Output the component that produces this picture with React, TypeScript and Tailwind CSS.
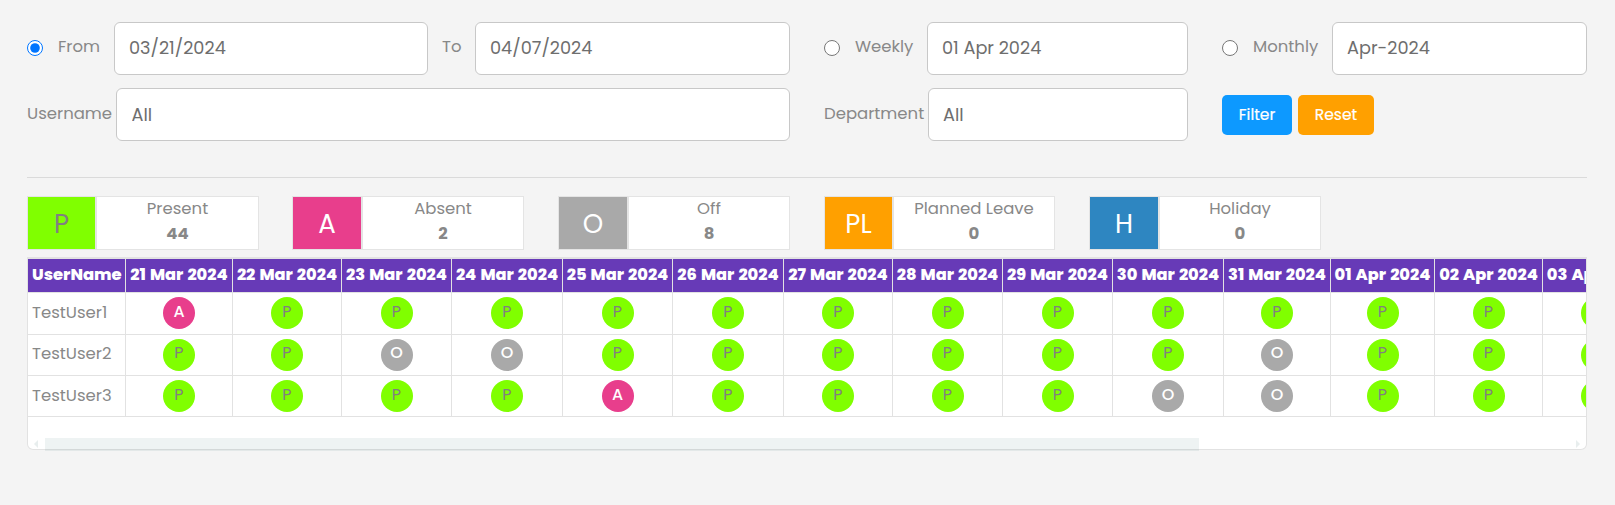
import clsx from "clsx";

type Status = "P" | "A" | "O";

const summary = [
  { code: "P", label: "Present", count: 44, box: "mr-[33px] w-[232px]", color: "w-[67px] bg-[#80ff00] text-[#808080]" },
  { code: "A", label: "Absent", count: 2, box: "mr-[34px] w-[232px]", color: "w-[68px] bg-[#e83e8c] text-white" },
  { code: "O", label: "Off", count: 8, box: "mr-[34px] w-[232px]", color: "w-[68px] bg-[#a9a9a9] text-white" },
  { code: "PL", label: "Planned Leave", count: 0, box: "mr-[34px] w-[231px]", color: "w-[67px] bg-[#ffa000] text-white" },
  { code: "H", label: "Holiday", count: 0, box: "w-[232px]", color: "w-[68px] bg-[#2e86c1] text-white" },
];

const columns = [
  { date: "21 Mar 2024", width: "w-[107px]" },
  { date: "22 Mar 2024", width: "w-[109px]" },
  { date: "23 Mar 2024", width: "w-[110px]" },
  { date: "24 Mar 2024", width: "w-[111px]" },
  { date: "25 Mar 2024", width: "w-[110px]" },
  { date: "26 Mar 2024", width: "w-[111px]" },
  { date: "27 Mar 2024", width: "w-[109px]" },
  { date: "28 Mar 2024", width: "w-[110px]" },
  { date: "29 Mar 2024", width: "w-[110px]" },
  { date: "30 Mar 2024", width: "w-[111px]" },
  { date: "31 Mar 2024", width: "w-[107px]" },
  { date: "01 Apr 2024", width: "w-[104px]" },
  { date: "02 Apr 2024", width: "w-[108px]" },
  { date: "03 Apr 2024", width: "w-[108px]" },
];

const users = [
  { name: "TestUser1", height: "h-[42px]", cell: "pb-0", badge: "pb-0.5", days: "APPPPPPPPPPPPP" },
  { name: "TestUser2", height: "h-[41px]", cell: "pb-0.5", badge: "pb-1", days: "PPOOPPPPPPOPPP" },
  { name: "TestUser3", height: "h-[41px]", cell: "pb-0", badge: "pb-0.5", days: "PPPPAPPPPOOPPP" },
];

const statusColor: Record<Status, string> = {
  P: "bg-[#80ff00] text-[#808080]",
  A: "bg-[#e83e8c] text-white font-medium",
  O: "bg-[#a9a9a9] text-white font-medium",
};

const Field = ({ value, className }: { value: string; className: string }) => (
  <input
    readOnly
    value={value}
    className={clsx(
      "h-[53px] rounded-md border border-[#c8c8c8] bg-white px-3.5 text-[17.7px] text-[#6e6e6e] outline-none",
      className
    )}
  />
);

const Label = ({ text, className }: { text: string; className: string }) => (
  <span className={clsx("whitespace-nowrap", className)}>{text}</span>
);

const Filters = () => {
  return (
    <div>
      <div className="flex items-center">
        <input type="radio" name="range" defaultChecked className="mb-px size-4" />
        <Label text="From" className="ml-[15px] w-14 pb-[3px]" />
        <Field value="03/21/2024" className="w-[314px] pb-0.5" />
        <Label text="To" className="ml-3.5 w-[33px] pb-[3px]" />
        <Field value="04/07/2024" className="w-[315px] pb-0.5" />
        <input type="radio" name="range" className="mb-px ml-[34px] size-4" />
        <Label text="Weekly" className="ml-[15px] w-[72px] pb-[3px]" />
        <Field value="01 Apr 2024" className="w-[261px] pb-0.5" />
        <input type="radio" name="range" className="mb-px ml-[34px] size-4" />
        <Label text="Monthly" className="ml-[15px] w-[79px] pb-[3px]" />
        <Field value="Apr-2024" className="w-[255px] pb-0.5" />
      </div>
      <div className="mt-[13px] flex items-center">
        <Label text="Username" className="w-[89px] pb-px" />
        <Field value="All" className="w-[674px] pl-[14.5px]" />
        <Label text="Department" className="ml-[34px] w-[104px] pb-px" />
        <Field value="All" className="w-[260px] pl-3.5" />
        <button className="ml-[34px] h-10 w-[70px] rounded-[5px] bg-[#0d99ff] text-[15.5px] text-white [-webkit-text-stroke:0.2px_white]">
          Filter
        </button>
        <button className="ml-1.5 h-10 w-[76px] rounded-[5px] bg-[#ffa000] text-[15.5px] text-white [-webkit-text-stroke:0.2px_white]">
          Reset
        </button>
      </div>
    </div>
  );
};

const Summary = () => {
  return (
    <div className="mt-[18px] flex">
      {summary.map((item) => (
        <div key={item.code} className={clsx("flex h-[54px] border border-[#e4e4e4]", item.box)}>
          <div className={clsx("flex items-center justify-center pt-0.5 text-[26px]", item.color)}>
            {item.code}
          </div>
          <div className="flex-1 border-l-2 border-[#e4e4e4] bg-white text-center">
            <p className="leading-6">{item.label}</p>
            <p className="leading-[26px] font-bold">{item.count}</p>
          </div>
        </div>
      ))}
    </div>
  );
};

const AttendanceTable = () => {
  return (
    <div className="mt-[7px]">
      <div className="h-[193px] overflow-hidden rounded-b-md border border-t-2 border-[#e2e2e2] bg-white">
        <table className="w-[1623px] table-fixed border-separate border-spacing-0">
          <thead>
            <tr className="h-[34px] bg-[#673ab7] text-[16.2px] text-white">
              <th className="w-[98px] border-r border-b border-[#e2e2e2] p-0 pl-1 text-left text-[16.4px] font-extrabold whitespace-nowrap">
                UserName
              </th>
              {columns.map((column) => (
                <th
                  key={column.date}
                  className={clsx(
                    "border-r border-b border-[#e2e2e2] p-0 font-extrabold [word-spacing:1px] whitespace-nowrap",
                    column.width
                  )}
                >
                  {column.date}
                </th>
              ))}
            </tr>
          </thead>
          <tbody>
            {users.map((user) => (
              <tr key={user.name} className={user.height}>
                <td className={clsx("border-r border-b border-[#e2e2e2] pt-0 pr-0 pl-1", user.cell)}>
                  {user.name}
                </td>
                {user.days.split("").map((day, index) => (
                  <td key={index} className="border-r border-b border-[#e2e2e2] p-0 pt-1 align-top">
                    <div
                      className={clsx(
                        "mx-auto flex size-8 items-center justify-center rounded-full text-base",
                        user.badge,
                        statusColor[day as Status]
                      )}
                    >
                      {day}
                    </div>
                  </td>
                ))}
              </tr>
            ))}
          </tbody>
        </table>
      </div>
      {/* scrollbar, sits over the bottom border */}
      <div className="relative mt-[-12px] flex h-[13px] items-center">
        <svg className="mb-px ml-[7px] h-2 w-1" viewBox="0 0 4 8">
          <path d="M4 0v8L0 4z" fill="#e8eeee" />
        </svg>
        <div className="ml-[7px] h-[13px] w-[1154px] bg-[#0d4f4f]/7" />
        <svg className="mr-[7px] mb-px ml-auto h-2 w-1" viewBox="0 0 4 8">
          <path d="M0 0v8l4-4z" fill="#e8eeee" />
        </svg>
      </div>
    </div>
  );
};

export default function App() {
  return (
    <div className="min-h-screen bg-[#f4f4f4] px-[27px] pt-[22px] font-['Poppins','Inter',sans-serif] text-[16.5px] text-[#888888]">
      <div className="w-[1560px]">
        <Filters />
        <hr className="mt-9 border-[#dadada]" />
        <Summary />
        <AttendanceTable />
      </div>
    </div>
  );
}
